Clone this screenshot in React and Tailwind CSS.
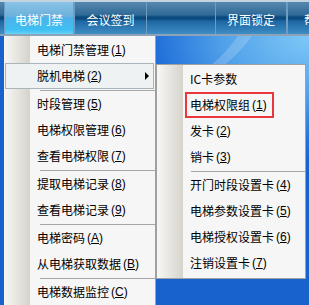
const mainItems = [
  { label: '电梯门禁管理', key: '1' },
  { label: '脱机电梯', key: '2', sub: true, active: true },
  'sep',
  { label: '时段管理', key: '5' },
  { label: '电梯权限管理', key: '6' },
  { label: '查看电梯权限', key: '7' },
  'sep',
  { label: '提取电梯记录', key: '8' },
  { label: '查看电梯记录', key: '9' },
  'sep',
  { label: '电梯密码', key: 'A' },
  { label: '从电梯获取数据', key: 'B' },
  'sep',
  { label: '电梯数据监控', key: 'C' },
]

const subItems = [
  { label: 'IC卡参数' },
  { label: '电梯权限组', key: '1', marked: true },
  { label: '发卡', key: '2' },
  { label: '销卡', key: '3' },
  'sep',
  { label: '开门时段设置卡', key: '4' },
  { label: '电梯参数设置卡', key: '5' },
  { label: '电梯授权设置卡', key: '6' },
  { label: '注销设置卡', key: '7' },
]

const tabs = [
  { label: '电梯门禁', w: 'w-[70px] justify-center', active: true },
  { label: '会议签到', w: 'w-[73px] justify-center' },
  { spacer: true, w: 'w-[68px]' },
  { label: '界面锁定', w: 'w-[72px] justify-center' },
  { label: '帮助', w: 'w-[60px] justify-start pl-[16px]' },
]

function Label({ label, accel }) {
  return (
    <span className="flex items-center whitespace-nowrap">
      <span>{label}</span>
      {accel ? (
        <span className="ml-[2px] font-['Liberation_Sans',sans-serif] text-[12px]">
          (<u>{accel}</u>)
        </span>
      ) : null}
    </span>
  )
}

function MenuList({ items, sepIndent }) {
  return items.map((item, i) => {
    if (item === 'sep') {
      return <div key={i} className={`h-[2px] border-b border-[#a6a6a6] ${sepIndent}`} />
    }
    if (item.active) {
      return (
        <div
          key={i}
          className="mx-[1px] flex h-[26px] items-center border border-[#a9b4bb] bg-[#eef2f2] pl-[31px] pr-[4px]"
        >
          <Label label={item.label} accel={item.key} />
          {item.sub ? (
            <span className="ml-auto h-0 w-0 border-y-[4px] border-l-[4px] border-y-transparent border-l-black" />
          ) : null}
        </div>
      )
    }
    return (
      <div key={i} className="relative flex h-[26px] items-center pl-[33px]">
        <Label label={item.label} accel={item.key} />
        {item.marked ? (
          <div className="absolute left-[28px] top-0 h-[26px] w-[89px] border-2 border-[#e8383c]" />
        ) : null}
      </div>
    )
  })
}

export default function App() {
  return (
    <div className="relative h-[305px] w-[309px] overflow-hidden bg-[#1460c8] font-['Noto_Sans_CJK_SC',sans-serif] text-[12px] text-black">
      {/* top menu bar */}
      <div className="flex h-[36px] border-b-2 border-[#8ea3b6] bg-[linear-gradient(to_bottom,#c3d4e0_0px,#c3d4e0_2px,#5688ae_2px,#2f6a97_15px,#0b4a7e_17px,#0b4a7e_19px,#1d67a2_21px,#3e8dc5_34px)] pl-[4px]">
        {tabs.map((t, i) =>
          t.spacer ? (
            <div key={i} className={`shrink-0 ${t.w}`} />
          ) : (
            <div
              key={i}
              className={[
                'mt-[2px] flex shrink-0 items-center border-x border-[#6f9dc1] pt-[3px] text-white',
                t.w,
                t.active
                  ? 'bg-[linear-gradient(to_bottom,#8ac3e6_0px,#6db1dc_14px,#4cb2e8_16px,#3ec0f3_28px,#68d3f8_32px)]'
                  : '',
              ].join(' ')}
            >
              {t.label}
            </div>
          ),
        )}
      </div>

      {/* desktop wallpaper */}
      <div className="relative h-[269px] bg-[radial-gradient(ellipse_190px_130px_at_310px_0px,#80c8f7_0%,#52a2ea_45%,#2372da_80%,#1762cc_100%)]">
        <svg className="absolute left-0 top-0" width="309" height="60" viewBox="0 0 309 60">
          <path d="M196 40 C 215 28, 228 14, 238 0 L 252 0 C 240 16, 226 30, 204 44 Z" fill="#ffffff" opacity="0.18" />
        </svg>
      </div>

      {/* main dropdown */}
      <div className="absolute left-[4px] top-[36px] w-[152px] border-r border-[#a0a0a0] bg-[linear-gradient(to_right,#f7f7f5_0px,#d5d3cb_26px,#f6f6f6_26px)] pt-[1px]">
        <MenuList items={mainItems} sepIndent="ml-[36px]" />
      </div>

      {/* sub menu */}
      <div className="absolute left-[156px] top-[64px] w-[150px] border border-[#a0a0a0] bg-[linear-gradient(to_right,#f7f7f5_0px,#d5d3cb_26px,#f6f6f6_26px)] pb-[2px] pt-[1px]">
        <MenuList items={subItems} sepIndent="ml-[34px]" />
      </div>
    </div>
  )
}
